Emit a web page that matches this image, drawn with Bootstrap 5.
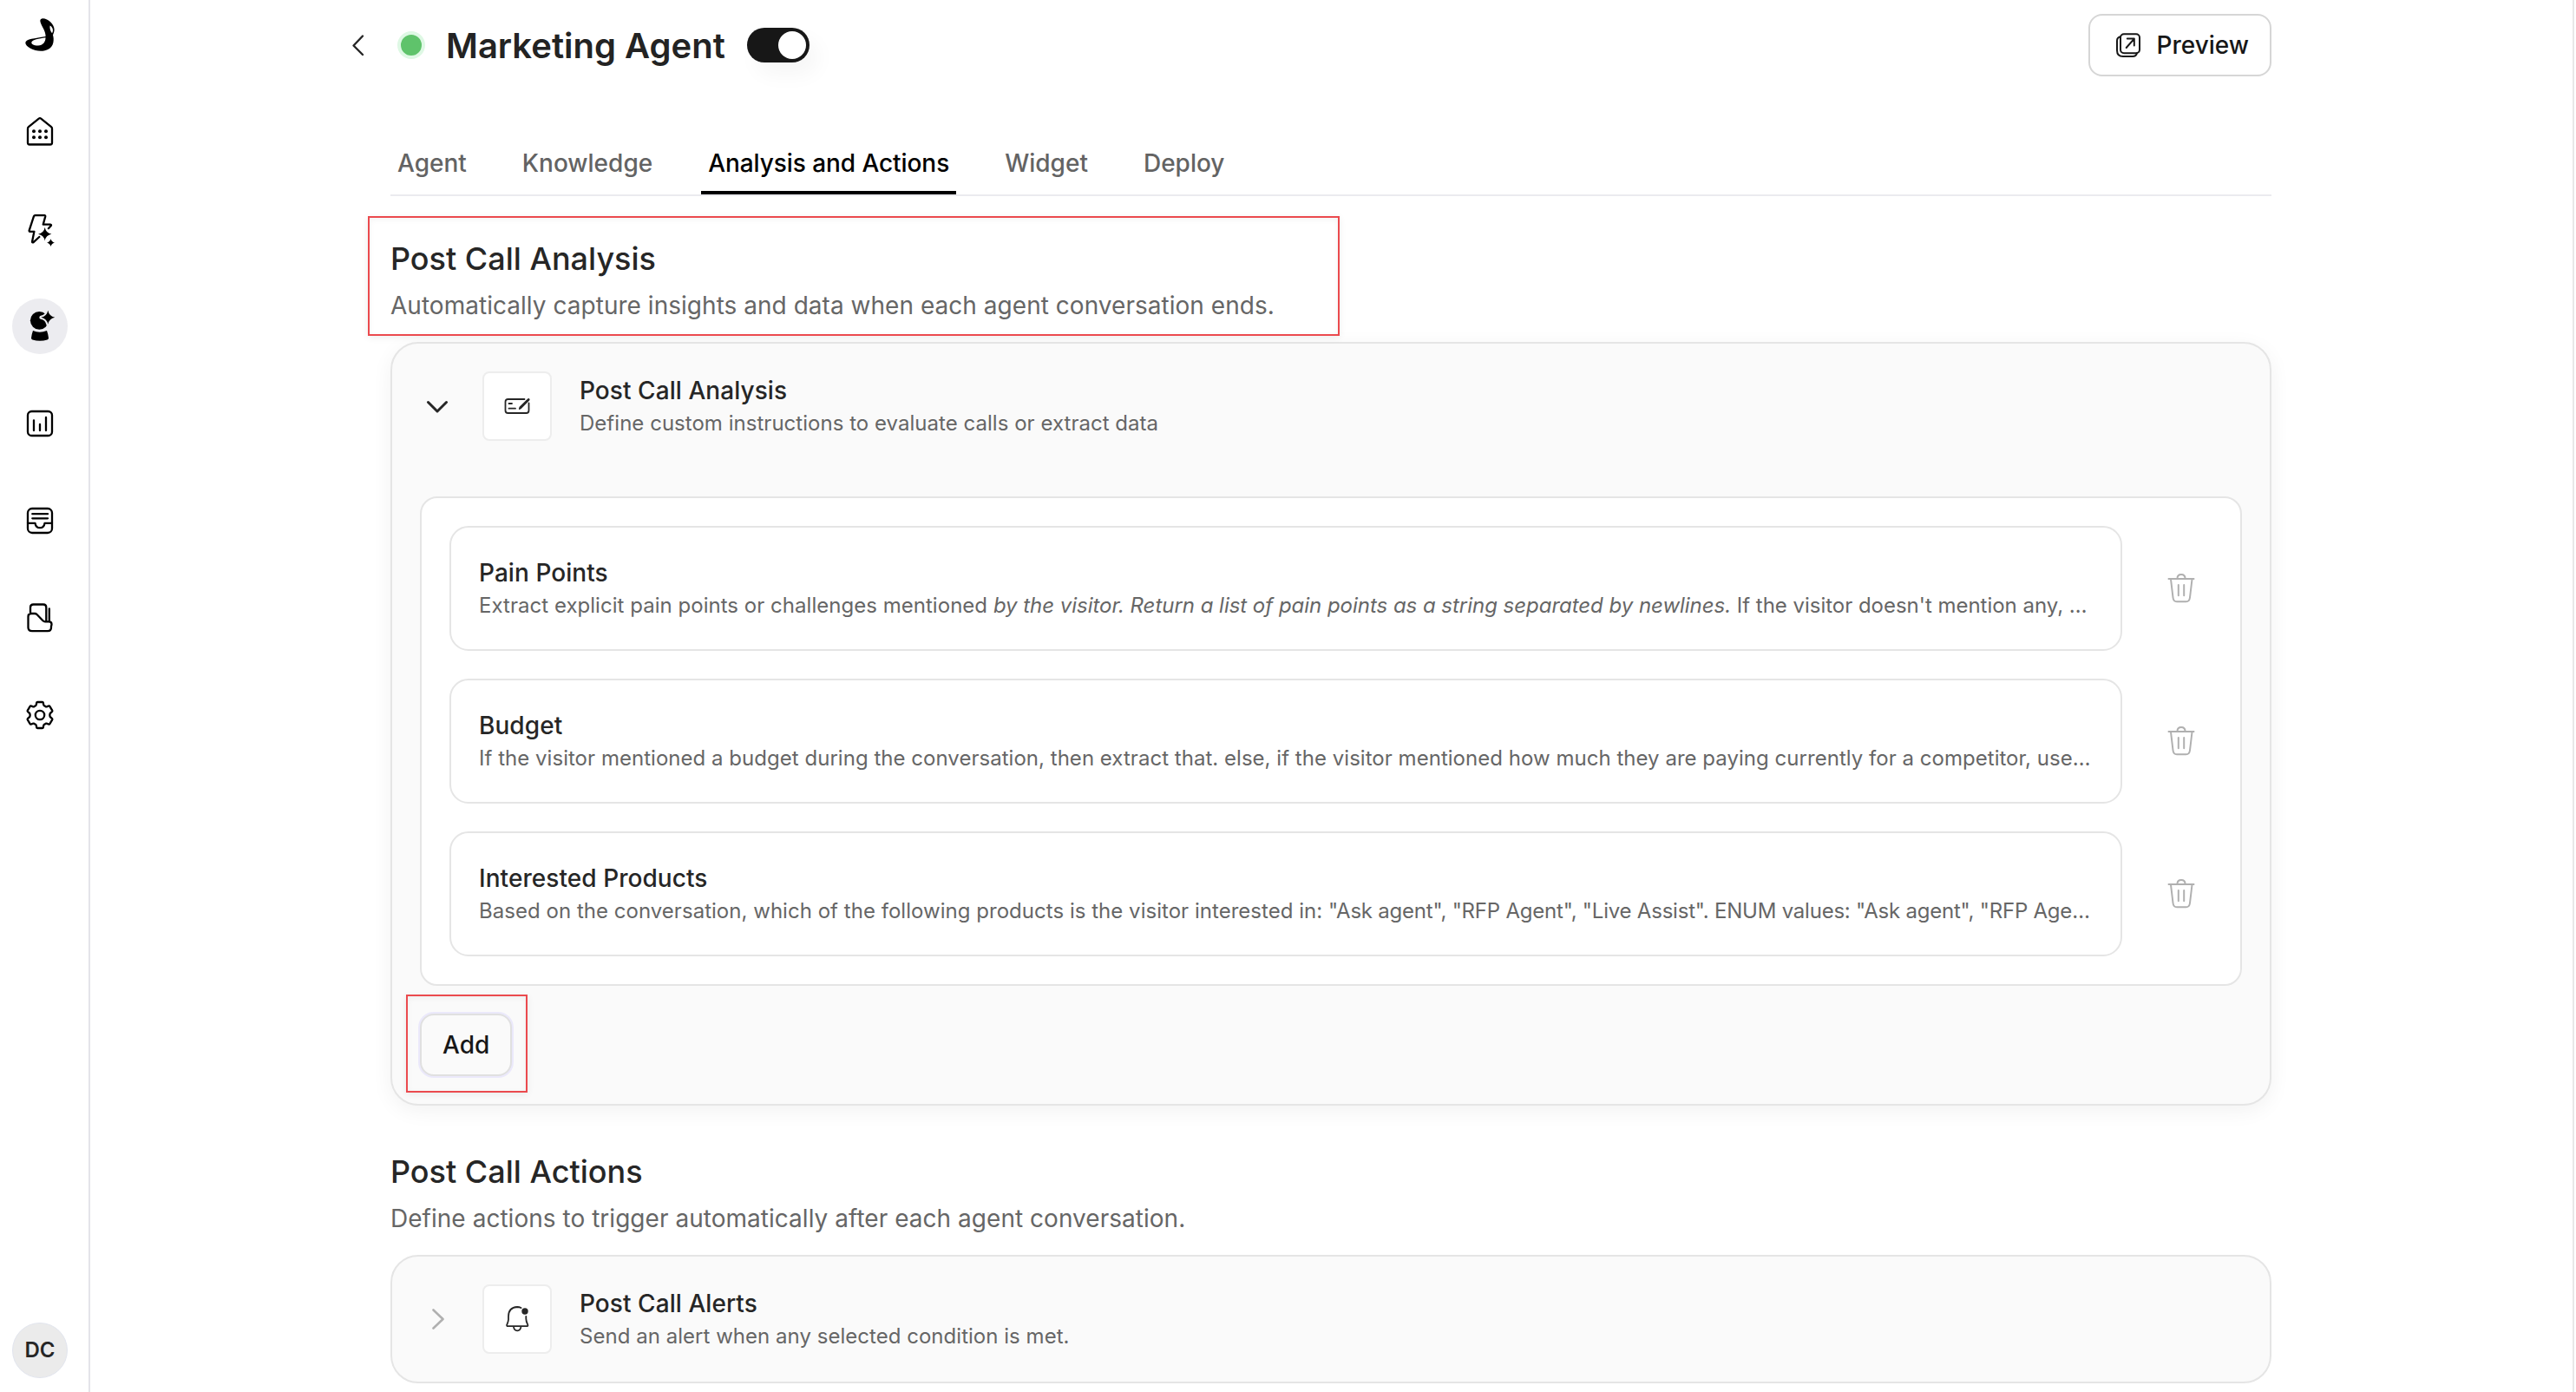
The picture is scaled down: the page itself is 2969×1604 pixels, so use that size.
<!DOCTYPE html>
<html lang="en">
<head>
<meta charset="utf-8">
<meta name="viewport" content="width=device-width, initial-scale=1">
<title>Marketing Agent</title>
<link href="https://cdn.jsdelivr.net/npm/bootstrap@5.3.0/dist/css/bootstrap.min.css" rel="stylesheet">
<style>
  body { font-family: Inter, "Liberation Sans", sans-serif; font-size: 28px; line-height: 40px; color: #262626; background: #fff; }
  svg { display: block; fill: none; stroke: currentColor; stroke-width: 2; stroke-linecap: round; stroke-linejoin: round; flex: none; }
  .side-rail { width: 104px; border-right: 2px solid #e4e4e9; padding: 20px 24px 16px 14px; color: #000; }
  .rail-link { width: 64px; height: 64px; color: #000; }
  .rail-link svg { stroke-width: 2.3; }
  .rail-link.active { background: #ececf0; }
  .rail-nav { gap: 48px; margin-top: 60px; }
  .avatar { width: 64px; height: 64px; font-size: 24px; font-weight: 600; background: #ebebeb; border: 1px solid #e2e5ee; color: #262626; }
  .page { min-width: 0; border-right: 2px solid #e8e8e8; margin-right: 2px; padding-left: 346px; padding-right: 347px; }
  .page-head { padding-top: 16px; height: 88px; margin-left: -58px; }
  .back { stroke-width: 2.4; }
  .status-dot { width: 32px; height: 32px; border: 4px solid #def8e4; background: #5fc36b; margin-left: 26px; margin-right: 24px; }
  .page-title { font-size: 40px; font-weight: 600; line-height: 48px; color: #232323; padding-top: 1px; }
  .toggle { width: 72px; height: 40px; padding: 4px; background: #171717; margin-left: 25px; box-shadow: 10px 14px 24px rgba(0,0,0,.04); }
  .toggle-knob { width: 32px; height: 32px; background: #fff; }
  .btn-line { height: 72px; border: 2px solid #d6d6d6; border-radius: 16px; font-size: 28px; font-weight: 500; line-height: 40px; color: #171717; background: #fff; padding: 14px 24px; }
  .btn-preview { padding-left: 30px; gap: 18px; }
  .btn-add { border-color: #e0e0e0; background: #fafafa; box-shadow: 0 0 0 2px #ebe9fb; }
  .tab-row { margin-top: 68px; gap: 48px; border-bottom: 2px solid #ebebef; }
  .tab-row .nav-link { padding: 12px 8px; border-bottom: 4px solid transparent; font-weight: 500; color: #636363; }
  .tab-row .nav-link.active { color: #000; border-color: #000; letter-spacing: -.07px; }
  .sec-first { margin-top: 50px; }
  .sec-next { margin-top: 54px; }
  .sec-title { font-size: 36px; font-weight: 500; line-height: 44px; margin: 0 0 12px; }
  .sec-note { color: #666; margin: 0 0 22px; letter-spacing: .03px; }
  .panel { border: 2px solid #e5e5e5; border-radius: 32px; background: #fafafa; padding: 32px; }
  .panel-open { box-shadow: 0 6px 24px rgba(0,0,0,.055); }
  .panel-top { gap: 32px; height: 80px; }
  .caret-open { stroke-width: 3; }
  .caret-shut { stroke-width: 2.6; color: #b0b0b0; }
  .icon-tile { width: 80px; height: 80px; background: #fff; border: 2px solid #ededed; border-radius: 8px; }
  .icon-tile svg { stroke-width: 1.8; }
  .item-title { font-weight: 500; letter-spacing: .06px; }
  .item-note { font-size: 24px; line-height: 36px; color: #666; letter-spacing: .03px; }
  .item-note em { letter-spacing: -.03px; }
  .item-note .rest { letter-spacing: -.02px; }
  .item-note .quoted { letter-spacing: -.22px; }
  .inset { margin: 64px 0 32px; border: 2px solid #e5e5e5; border-radius: 20px; background: #fff; padding: 32px; gap: 32px; }
  .entry-line { gap: 32px; }
  .entry { border: 2px solid #e5e5e5; border-radius: 22px; padding: 32px; min-width: 0; }
  .trash { width: 72px; flex: none; color: #b0b0b0; }
  .callout { position: absolute; border: 2px solid #eb4a4e; box-shadow: 0 2px 8px rgba(0,0,0,.07), inset 0 2px 6px rgba(0,0,0,.05); pointer-events: none; }
  .callout-head { left: -26px; top: -27px; width: 1120px; height: 138px; }
  .callout-add { left: -16px; top: -22px; width: 140px; height: 113px; }
</style>
<script src="https://cdn.jsdelivr.net/npm/bootstrap@5.3.0/dist/js/bootstrap.bundle.min.js"></script>
</head>
<body class="d-flex vh-100 overflow-hidden">
<aside class="side-rail d-flex flex-column align-items-center flex-shrink-0">
  <svg width="40" height="40" viewBox="0 0 40 40"><path fill="currentColor" fill-rule="evenodd" stroke="none" d="M23.3 1.2C29.5 1.2 36.8 8 36.6 14.5C36.5 17 35.3 19 35 20.5C35.8 23 36 26 35.4 29C34 36 27.5 38.8 21 38.8C13 38.8 3.3 34 3.3 29.3C3.6 24.5 14 24.6 26.6 22C26.8 15 20.3 8.5 20.3 3.8C20.4 2.2 21.7 1.2 23.3 1.2ZM31.6 9.4C31 12 32 15.500 34 18.300C35.800 15.500 35.300 11.500 31.600 9.400ZM26.500 23.200C19 24.800 11 25.200 10.300 28.800C10.200 31.500 14 32.800 18 32.600C23.500 32.300 26.600 28 26.500 23.200Z"/></svg>
  <nav class="rail-nav d-flex flex-column">
    <a href="#" class="rail-link rounded-circle d-flex align-items-center justify-content-center"><svg width="40" height="40" viewBox="0 0 40 40"><path d="M6 16.200Q6 15 7 14.200L18.800 4.600Q20 3.700 21.200 4.600L33 14.200Q34 15 34 16.200V32.500Q34 34.500 32 34.500H8Q6 34.500 6 32.500Z"/><g fill="currentColor" stroke="none"><circle cx="13" cy="19.300" r="2"/><circle cx="20" cy="19.300" r="2"/><circle cx="27" cy="19.300" r="2"/><circle cx="13" cy="26.300" r="2"/><circle cx="20" cy="26.300" r="2"/><circle cx="27" cy="26.300" r="2"/></g></svg></a>
    <a href="#" class="rail-link rounded-circle d-flex align-items-center justify-content-center"><svg width="40" height="40" viewBox="0 0 40 40"><path d="M19.300 29L12.600 35.200Q11 36 11.100 34.200L13.400 22.800H8.600Q7.300 22.600 7.700 21.300L13 5.200Q13.400 4.200 14.500 4.200H25.200Q26.500 4.300 26.200 5.600L23.700 14.700H32Q33.600 14.900 32.600 16.300L29.900 19.200"/><path fill="currentColor" stroke="none" d="M25.700 18Q26.900 24.500 33.400 25.700Q26.900 26.900 25.700 33.400Q24.500 26.900 18 25.700Q24.500 24.500 25.700 18ZM32.500 31.300Q33.400 34.800 36.900 35.700Q33.400 36.600 32.500 40Q31.600 36.600 28.100 35.700Q31.600 34.800 32.500 31.300Z"/></svg></a>
    <a href="#" class="rail-link active rounded-circle d-flex align-items-center justify-content-center"><svg width="40" height="40" viewBox="0 0 40 40"><g fill="currentColor" stroke="none"><circle cx="19.300" cy="13.300" r="10.400"/><path d="M12 25Q19.500 28.600 28 25Q29.500 29 30 33.500Q30 35 28.500 35.600Q20 38 11.500 35.600Q10 35 10 33.500Q10.500 29 12 25Z"/></g><path fill="currentColor" stroke="#ececf0" stroke-width="4" paint-order="stroke" d="M29.300 1.800Q30.600 8.400 37.200 9.700Q30.600 11 29.300 17.600Q28 11 21.400 9.700Q28 8.400 29.300 1.800Z"/></svg></a>
    <a href="#" class="rail-link rounded-circle d-flex align-items-center justify-content-center"><svg width="40" height="40" viewBox="0 0 40 40"><rect x="6" y="6" width="28" height="28" rx="4.500"/><path d="M13 16.300V28M20 21V28M27 13V28"/></svg></a>
    <a href="#" class="rail-link rounded-circle d-flex align-items-center justify-content-center"><svg width="40" height="40" viewBox="0 0 40 40"><rect x="6" y="6" width="28" height="28" rx="5"/><path d="M11.300 12.200H29M11.300 17.300H29M6 22.800H14.500Q15.300 28.200 20 28.200T25.500 22.800H34"/></svg></a>
    <a href="#" class="rail-link rounded-circle d-flex align-items-center justify-content-center"><svg width="40" height="40" viewBox="0 0 40 40"><path d="M9 15V8Q9 4.500 12.500 4.500H24Q27.300 4.500 27.300 8V24.300M30.800 9.500V24.300M10 15H14Q15.500 15 16.500 16L23.500 23.300Q24.500 24.300 26 24.300H30.500Q33.500 24.300 33.500 27.300Q33.500 28.500 33 29.500V31Q33 35.200 29 35.200H11Q6.500 35.200 6.500 31V18.500Q6.500 15 10 15Z"/></svg></a>
    <a href="#" class="rail-link rounded-circle d-flex align-items-center justify-content-center"><svg width="40" height="40" viewBox="-20 -20 40 40"><path d="M-5.100-10.700Q-4.300-11.200-4.100-12.400L-3.900-14Q-3.700-15-2.700-15H2.700Q3.700-15 3.900-14L4.100-12.400Q4.300-11.200 5.100-10.700L6.500-9.900Q7.300-9.500 8.400-9.900L9.900-10.500Q10.900-10.900 11.500-9.900L14.200-5.400Q14.700-4.500 13.900-3.800L12.300-2.500Q11.400-1.800 11.400-.8V.8Q11.400 1.800 12.300 2.500L13.900 3.800Q14.700 4.500 14.200 5.400L11.500 9.900Q10.900 10.900 9.900 10.500L8.400 9.900Q7.300 9.500 6.500 9.900L5.100 10.700Q4.300 11.200 4.100 12.400L3.900 14Q3.700 15 2.700 15H-2.700Q-3.700 15-3.900 14L-4.100 12.400Q-4.300 11.200-5.100 10.700L-6.500 9.900Q-7.300 9.500-8.400 9.900L-9.900 10.500Q-10.900 10.900-11.500 9.900L-14.200 5.400Q-14.700 4.500-13.900 3.800L-12.300 2.500Q-11.400 1.800-11.400 .8V-.8Q-11.400-1.800-12.300-2.500L-13.900-3.800Q-14.700-4.500-14.200-5.400L-11.500-9.900Q-10.900-10.900-9.900-10.500L-8.400-9.900Q-7.300-9.500-6.500-9.900Z"/><circle r="5.200"/></svg></a>
  </nav>
  <div class="avatar rounded-circle d-flex align-items-center justify-content-center mt-auto">DC</div>
</aside>

<main class="page flex-grow-1">
  <header class="page-head d-flex align-items-center">
    <svg class="back" width="40" height="40" viewBox="0 0 40 40"><path d="M26 9.500L15.500 20.500L26 31"/></svg>
    <span class="status-dot rounded-circle"></span>
    <h1 class="page-title mb-0">Marketing Agent</h1>
    <div class="toggle rounded-pill d-flex justify-content-end"><span class="toggle-knob rounded-circle"></span></div>
    <button class="btn btn-line btn-preview d-flex align-items-center ms-auto"><svg width="28" height="28" viewBox="0 0 28 28"><rect x="5" y="1.200" width="22" height="22" rx="4"/><path d="M5 4.200Q1 5 1 9V20Q1 27 8 27H19Q23 27 24 23.200M11.700 17L20.600 6.800M12.800 6.600H20.800V14.500"/></svg>Preview</button>
  </header>

  <nav class="tab-row nav flex-nowrap">
    <a class="nav-link" href="#">Agent</a>
    <a class="nav-link" href="#">Knowledge</a>
    <a class="nav-link active" href="#">Analysis and Actions</a>
    <a class="nav-link" href="#">Widget</a>
    <a class="nav-link" href="#">Deploy</a>
  </nav>

  <section class="sec-first position-relative">
    <h2 class="sec-title">Post Call Analysis</h2>
    <p class="sec-note">Automatically capture insights and data when each agent conversation ends.</p>
    <div class="panel panel-open">
      <div class="panel-top d-flex align-items-center">
        <svg class="caret-open" width="40" height="40" viewBox="0 0 40 40"><path d="M9.500 15.500L20 26L30.500 15.500"/></svg>
        <div class="icon-tile d-flex align-items-center justify-content-center"><svg width="32" height="32" viewBox="0 0 32 32"><path d="M24.500 8H5.500Q2.500 8 2.500 11V21Q2.500 24 5.500 24H26.500Q29.500 24 29.500 21V12.500M6.500 13H10M6.500 18.700H14M18.800 19L19.300 17.500L28.500 8.300Q29.500 7.300 29.700 8.600L20.300 18.200Z"/></svg></div>
        <div><div class="item-title">Post Call Analysis</div><div class="item-note">Define custom instructions to evaluate calls or extract data</div></div>
      </div>
      <div class="inset d-flex flex-column">
        <div class="entry-line d-flex">
          <div class="entry flex-grow-1"><div class="item-title">Pain Points</div><div class="item-note text-nowrap">Extract explicit pain points or challenges mentioned <em>by the visitor. Return a list of pain points as a string separated by newlines.</em><span class="rest"> If the visitor doesn't mention any, …</span></div></div>
          <div class="trash d-flex align-items-center justify-content-center"><svg width="32" height="36" viewBox="0 0 32 36"><path d="M1.500 7H30.500M11.500 6.500Q11.500 2 16 2T20.500 6.500M4 7.500L6.500 28.500Q7 33.300 11 33.300H21.500Q25.500 33.300 26 28.500L28.500 7.500M12.800 14V26.300M19.200 14V26.300"/></svg></div>
        </div>
        <div class="entry-line d-flex">
          <div class="entry flex-grow-1"><div class="item-title">Budget</div><div class="item-note text-nowrap">If the visitor mentioned a budget during the conversation, then extract that. else, if the visitor mentioned how much they are paying currently for a competitor, use…</div></div>
          <div class="trash d-flex align-items-center justify-content-center"><svg width="32" height="36" viewBox="0 0 32 36"><path d="M1.500 7H30.500M11.500 6.500Q11.500 2 16 2T20.500 6.500M4 7.500L6.500 28.500Q7 33.300 11 33.300H21.500Q25.500 33.300 26 28.500L28.500 7.500M12.800 14V26.300M19.200 14V26.300"/></svg></div>
        </div>
        <div class="entry-line d-flex">
          <div class="entry flex-grow-1"><div class="item-title">Interested Products</div><div class="item-note text-nowrap">Based on the conversation, which of the following products is the visitor interested in: <span class="quoted">"Ask agent", "RFP Agent", "Live Assist". ENUM values: "Ask agent", "RFP Age…</span></div></div>
          <div class="trash d-flex align-items-center justify-content-center"><svg width="32" height="36" viewBox="0 0 32 36"><path d="M1.500 7H30.500M11.500 6.500Q11.500 2 16 2T20.500 6.500M4 7.500L6.500 28.500Q7 33.300 11 33.300H21.500Q25.500 33.300 26 28.500L28.500 7.500M12.800 14V26.300M19.200 14V26.300"/></svg></div>
        </div>
      </div>
      <div class="position-relative d-flex">
        <button class="btn btn-line btn-add">Add</button>
        <div class="callout callout-add"></div>
      </div>
    </div>
    <div class="callout callout-head"></div>
  </section>

  <section class="sec-next">
    <h2 class="sec-title">Post Call Actions</h2>
    <p class="sec-note">Define actions to trigger automatically after each agent conversation.</p>
    <div class="panel">
      <div class="panel-top d-flex align-items-center">
        <svg class="caret-shut" width="40" height="40" viewBox="0 0 40 40"><path d="M15.500 9.500L26.500 20L15.500 30.500"/></svg>
        <div class="icon-tile d-flex align-items-center justify-content-center"><svg width="32" height="32" viewBox="0 0 32 32"><path d="M20.500 3Q18.500 2 16.200 2Q6 2.500 6 13V16.500Q5.800 19 4.300 22.300Q3.700 24.200 5.500 24.200H27Q28.900 24.200 28.200 22.300Q26.300 18.500 26.300 15.500V12.800M11.900 24.500Q12.500 29.300 16.200 29.300T20.500 24.500"/><circle cx="25" cy="7" r="3.700" fill="currentColor" stroke="none"/></svg></div>
        <div><div class="item-title">Post Call Alerts</div><div class="item-note">Send an alert when any selected condition is met.</div></div>
      </div>
    </div>
  </section>
</main>
</body>
</html>
